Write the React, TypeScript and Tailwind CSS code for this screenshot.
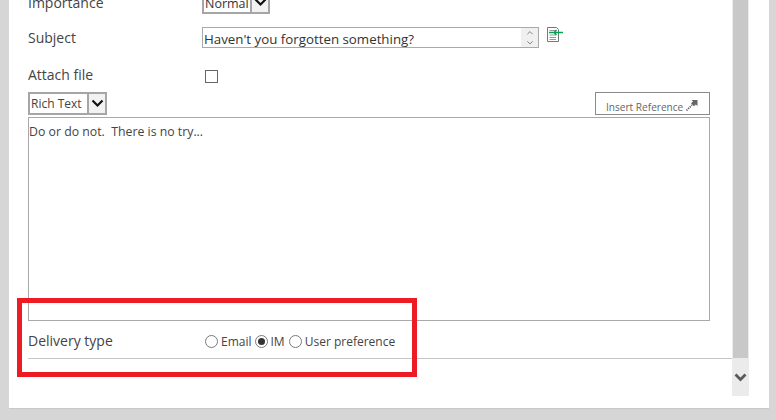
import { ChevronDown, ChevronUp } from 'lucide-react';

const FONT = "font-['Open_Sans','Noto_Sans',sans-serif]";

const DropArrow = () => (
  <span className="flex h-full w-[18px] items-center justify-center border-l-2 border-[#a6a6a6] bg-[#f2f2f2]">
    <svg width="13" height="9" viewBox="0 0 13 9">
      <path d="M1.5 1.5 L6.5 6.5 L11.5 1.5" fill="none" stroke="#111" strokeWidth="2.2" />
    </svg>
  </span>
);

const Radio = ({ checked = false }: { checked?: boolean }) => (
  <span className="flex h-[13px] w-[13px] shrink-0 items-center justify-center rounded-full border border-[#7a7a7a] bg-white">
    {checked && <span className="h-[7px] w-[7px] rounded-full bg-[#333]" />}
  </span>
);

export default function App() {
  return (
    <div className={`${FONT} flex h-[420px] w-[776px] overflow-hidden bg-[#d6d6d6] pb-[11px] pl-[9px] pr-[7px]`}>
      <div className="relative flex h-full min-w-0 flex-1 border-b border-[#c8c8c8] bg-white">
        {/* form */}
        <div className="h-[359px] w-[723px] shrink-0 pl-[19px]">
          <div className="flex h-full flex-col overflow-hidden border-b border-[#c6c6c6]">
            <div className="-mt-[8px] flex h-[22px] shrink-0 items-center">
              <span className="w-[174px] text-[14px] leading-[20px] text-[#444]">Importance</span>
              <div className="flex h-[22px] w-[68px] items-stretch border-2 border-t-0 border-[#a6a6a6] bg-white">
                <span className="flex-1 pl-px pt-[2px] text-[12.5px] leading-[20px] text-[#333]">Normal</span>
                <DropArrow />
              </div>
            </div>

            <div className="mt-[13px] flex h-[21px] shrink-0">
              <span className="mt-[1px] w-[174px] text-[14px] leading-[20px] text-[#444]">Subject</span>
              <div className="flex h-[21px] w-[337px] items-stretch border border-[#a9a9a9] bg-white">
                <span className="flex-1 pl-px pt-[1px] text-[13.3px] leading-[20px] text-[#333]">Haven't you forgotten something?</span>
                <span className="flex w-[17px] flex-col items-center justify-center bg-[#f0f0f0] text-[#666]">
                  <ChevronUp size={10} strokeWidth={2} />
                  <ChevronDown size={10} strokeWidth={2} />
                </span>
              </div>
              <svg className="ml-[8px]" width="17" height="16" viewBox="0 0 17 16">
                <path d="M0.5 0.5 H9.5 L11.5 2.5 V14.5 H0.5 Z" fill="#fff" stroke="#777" />
                <path d="M2.5 3.5 H9 M2.5 8 H9 M2.5 10.5 H9 M2.5 12.5 H9" stroke="#999" />
                <path d="M2 5.5 H16 M9.5 3 L7 5.5 L9.5 8" fill="none" stroke="#00a651" strokeWidth="1.4" />
              </svg>
            </div>

            <div className="mt-[17px] flex h-[20px] shrink-0 items-center">
              <span className="w-[177px] text-[14px] leading-[20px] text-[#444]">Attach file</span>
              <span className="mt-[3px] h-[13px] w-[13px] border border-[#666] bg-white" />
            </div>

            <div className="mt-[7px] flex h-[23px] w-[682px] shrink-0 items-start justify-between">
              <div className="flex h-[23px] w-[79px] items-stretch border-2 border-[#a6a6a6] bg-white">
                <span className="flex-1 pl-[1px] pt-px text-[12px] leading-[18px] text-[#444]">Rich Text</span>
                <DropArrow />
              </div>
              <div className="flex h-[23px] w-[115px] items-center gap-[3px] border border-[#8a8a8a] bg-white pl-[10px] pt-[6px]">
                <span className="text-[10.1px] leading-[16px] text-[#666]">Insert Reference</span>
                <svg className="-mt-[4px]" width="12" height="12" viewBox="0 0 12 12">
                  <path d="M5.5 1 H11.5 V7 L9.8 5.5 L8 7.2 L5 4.2 L7 2.5 Z" fill="#666" />
                  <path d="M0.5 11.5 L6 6" stroke="#666" strokeDasharray="1.3 1" strokeWidth="1.8" fill="none" />
                </svg>
              </div>
            </div>

            <div className="mt-[2px] h-[204px] w-[682px] shrink-0 border border-[#a9a9a9] bg-white pt-[5px] text-[12.3px] leading-[18px] text-[#444]">
              Do or do not.&nbsp; There is no try...
            </div>

            <div className="flex h-[37px] shrink-0 items-center pt-[3px]">
              <span className="w-[177px] text-[14px] leading-[20px] text-[#444]">Delivery type</span>
              <div className="flex items-center pt-[1px] text-[12px] leading-[18px] text-[#444]">
                <Radio />
                <span className="ml-[3px] mr-[3px]">Email</span>
                <Radio checked />
                <span className="ml-[3px] mr-[4px]">IM</span>
                <Radio />
                <span className="ml-[3px]">User preference</span>
              </div>
            </div>
          </div>
        </div>

        {/* scrollbar */}
        <div className="flex h-[396px] w-[17px] shrink-0 flex-col bg-[#ebebeb] px-px">
          <div className="h-[358px] bg-[#c8c8c8]" />
          <div className="flex flex-1 items-center justify-center">
            <svg width="13" height="9" viewBox="0 0 13 9">
              <path d="M1.5 1.5 L6.5 6.5 L11.5 1.5" fill="none" stroke="#5a5a5a" strokeWidth="2.8" />
            </svg>
          </div>
        </div>

        {/* annotation */}
        <div className="absolute left-[8px] top-[298px] h-[79px] w-[400px] border-[5px] border-[#ed1c24]" />
      </div>
    </div>
  );
}
